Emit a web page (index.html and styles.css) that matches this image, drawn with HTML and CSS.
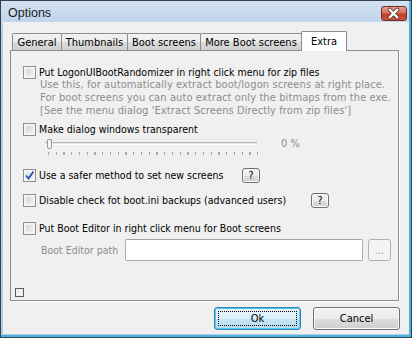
FILE: index.html
```html
<!DOCTYPE html>
<html>
  <head>
    <title>Options</title>
    <meta charset='utf-8'>
    <link rel="stylesheet" href="styles.css">
  </head>
  <body>
    <div class="window">
      <div class="titlebar">
        <span class="title">Options</span>
        <span class="close">
          <svg width="26" height="15" viewBox="0 0 26 15">
            <path d="M9 3.5 L17 11.5 M17 3.5 L9 11.5" stroke="#5a2a24" stroke-width="4.2" stroke-linecap="round"/>
            <path d="M9 3.5 L17 11.5 M17 3.5 L9 11.5" stroke="#fff" stroke-width="2.4" stroke-linecap="round"/>
          </svg>
        </span>
      </div>

      <div class="client">
        <!-- tabs -->
        <div class="tabs">
          <span class="tab t1">General</span>
          <span class="tab t2">Thumbnails</span>
          <span class="tab t3">Boot screens</span>
          <span class="tab t4">More Boot screens</span>
          <span class="tab sel">Extra</span>
        </div>

        <div class="pane">
          <div class="row r1"><span class="cb"></span><span>Put LogonUIBootRandomizer in right click menu for zip files</span></div>
          <div class="note">Use this, for automatically extract boot/logon screens at right place.<br>For boot screens you can auto extract only the bitmaps from the exe.<br>[See the menu dialog 'Extract Screens Directly from zip files']</div>

          <div class="row r2"><span class="cb"></span><span>Make dialog windows transparent</span></div>
          <div class="slider">
            <div class="track">
              <span class="groove"></span>
              <span class="thumb"></span>
              <span class="ticks"></span>
            </div>
            <span class="pct">0 %</span>
          </div>

          <div class="row r3">
            <span class="cb on">
              <svg width="11" height="11" viewBox="0 0 11 11"><path d="M2 5.5 L4.5 8.5 L9.5 1.5" fill="none" stroke="#3553a5" stroke-width="1.9"/></svg>
            </span>
            <span class="lbl w-safe">Use a safer method to set new screens</span>
            <span class="btn help">?</span>
          </div>

          <div class="row r4">
            <span class="cb"></span>
            <span class="lbl w-ini">Disable check fot boot.ini backups (advanced users)</span>
            <span class="btn help">?</span>
          </div>

          <div class="row r5"><span class="cb"></span><span>Put Boot Editor in right click menu for Boot screens</span></div>

          <div class="pathrow">
            <span class="pathlbl">Boot Editor path</span>
            <span class="field"></span>
            <span class="btn browse">...</span>
          </div>

          <span class="mini"></span>
        </div>

        <div class="actions">
          <span class="btn big def"><span class="focus">Ok</span></span>
          <span class="btn big">Cancel</span>
        </div>
      </div>
    </div>
  </body>
</html>
```

FILE: styles.css
```css
* {box-sizing: border-box;}
body {margin: 0; font-family: 'DejaVu Sans Condensed', Tahoma, 'Liberation Sans', sans-serif; font-size: 11px; color: #000;}

/* window frame */
.window {width: 412px; height: 338px; border: 1px solid #35414f; background: linear-gradient(#d3e2f2, #b8cfe8 30px, #b3cbe6); box-shadow: inset -2px -2px 0 #4bb3e0; display: flex; flex-direction: column;}
.titlebar {height: 21px; display: flex; align-items: center; padding-left: 7px;}
.title {font-family: 'Liberation Sans', sans-serif; font-size: 12.5px; color: #1b1b1b; margin-top: 2px;}
.close {margin-left: auto; margin-right: 4px; margin-top: 4px; width: 26px; height: 15px; border: 1px solid #6d3028; border-radius: 3px; background: linear-gradient(#e6a291, #d4735d 45%, #bd3f27 55%, #c9553a); display: flex;}
.close svg {margin: -1px 0 0 -1px;}

.client {flex: 1; margin: 0 2px 3px 2px; background: #f0f0f0; padding-top: 9px;}

/* tabs */
.tabs {display: flex; align-items: flex-end; margin-left: 9px; height: 19px;}
.tab {height: 17px; border: 1px solid #898c95; border-bottom: none; margin-right: -1px; background: linear-gradient(#f3f3f3, #ebebeb 50%, #dcdcdc 51%, #cfcfcf); display: flex; align-items: center; justify-content: center; padding-top: 1px; border-radius: 2px 2px 0 0;}
.t1 {width: 50px;}
.t2 {width: 67px;}
.t3 {width: 74px;}
.t4 {width: 102px;}
.tab.sel {width: 46px; height: 20px; margin-bottom: -1px; background: #fff; position: relative; z-index: 1; padding-top: 0;}

.pane {margin-left: 7px; width: 389px; height: 251px; border: 1px solid #898c95; box-shadow: 1px 1px 0 #fff; background: #f0f0f0; padding-left: 12px; display: flex; flex-direction: column; align-items: flex-start;}

.row {display: flex; align-items: center; gap: 3px; line-height: 13px; font-size: 10.5px;}
.r1 {margin-top: 15px; height: 13px;}
.note {margin: -1px 0 0 17px; line-height: 13px; color: #8d8d8d; letter-spacing: 0.1px;}
.r2 {margin-top: 6px; height: 13px;}
.r3 {margin-top: 10px; height: 15px;}
.r4 {margin-top: 10px; height: 15px;}
.r5 {margin-top: 14px; height: 13px;}

.cb {width: 13px; height: 13px; border: 1px solid #8e8f8f; background: linear-gradient(135deg, #cfcfcf, #f7f7f7); box-shadow: inset 0 0 0 2px #f4f4f4; display: flex; align-items: center; justify-content: center; flex: none;}
.cb.on {background: linear-gradient(135deg, #d8dde6, #f7f8fa);}

.lbl {flex: none;}
.w-safe {width: 200px;}
.w-ini {width: 269px;}

/* trackbar */
.slider {display: flex; margin: 2px 0 0 22px; height: 20px;}
.track {width: 212px; position: relative;}
.groove {position: absolute; left: 0; right: 0; top: 4px; height: 3px; border-top: 1px solid #b5b5b5; border-bottom: 1px solid #fff; background: #e7e7e7;}
.thumb {position: absolute; left: 2px; top: 1px; width: 5px; height: 10px; border: 1px solid #9a9a9a; border-radius: 1px 1px 2px 2px; background: #f4f4f4;}
.ticks {position: absolute; left: 3px; top: 14px; width: 210px; height: 3px; background: repeating-linear-gradient(90deg, #a8a8a8 0 1px, transparent 1px 7.75px);}
.pct {margin: -1px 0 0 24px; color: #8d8d8d; line-height: 13px;}

/* buttons */
.btn {border: 1px solid #707070; border-radius: 3px; background: linear-gradient(#f2f2f2, #ebebeb 50%, #dddddd 51%, #cfcfcf); display: flex; align-items: center; justify-content: center; box-shadow: inset 0 0 0 1px #fbfbfb;}
.help {width: 18px; height: 15px;}
.big {width: 87px; height: 23px;}
.def {border-color: #3c7fb1; box-shadow: inset 0 0 0 1px #48d0f4; background: linear-gradient(#e9f5fb, #dcf0fa 50%, #c4e5f6 51%, #b9dcf0);}
.focus {width: 79px; height: 15px; border: 1px dotted #000; display: flex; align-items: center; justify-content: center;}

.pathrow {display: flex; align-items: center; margin: 4px 0 0 18px; height: 22px; font-size: 10.5px;}
.pathlbl {width: 84px; color: #8d8d8d;}
.field {width: 238px; height: 22px; border: 1px solid #abadb3; border-top-color: #9ea2ab; border-radius: 2px; background: #fff;}
.browse {width: 23px; height: 22px; margin-left: 5px; border-color: #adb2b5; background: #f4f4f4; color: #a0a0a0; box-shadow: none;}

.mini {width: 9px; height: 9px; border: 1px solid #5c5c5c; margin: 27px 0 0 -8px;}

.actions {display: flex; justify-content: flex-end; gap: 12px; margin: 6px 9px 0 0;}
```
